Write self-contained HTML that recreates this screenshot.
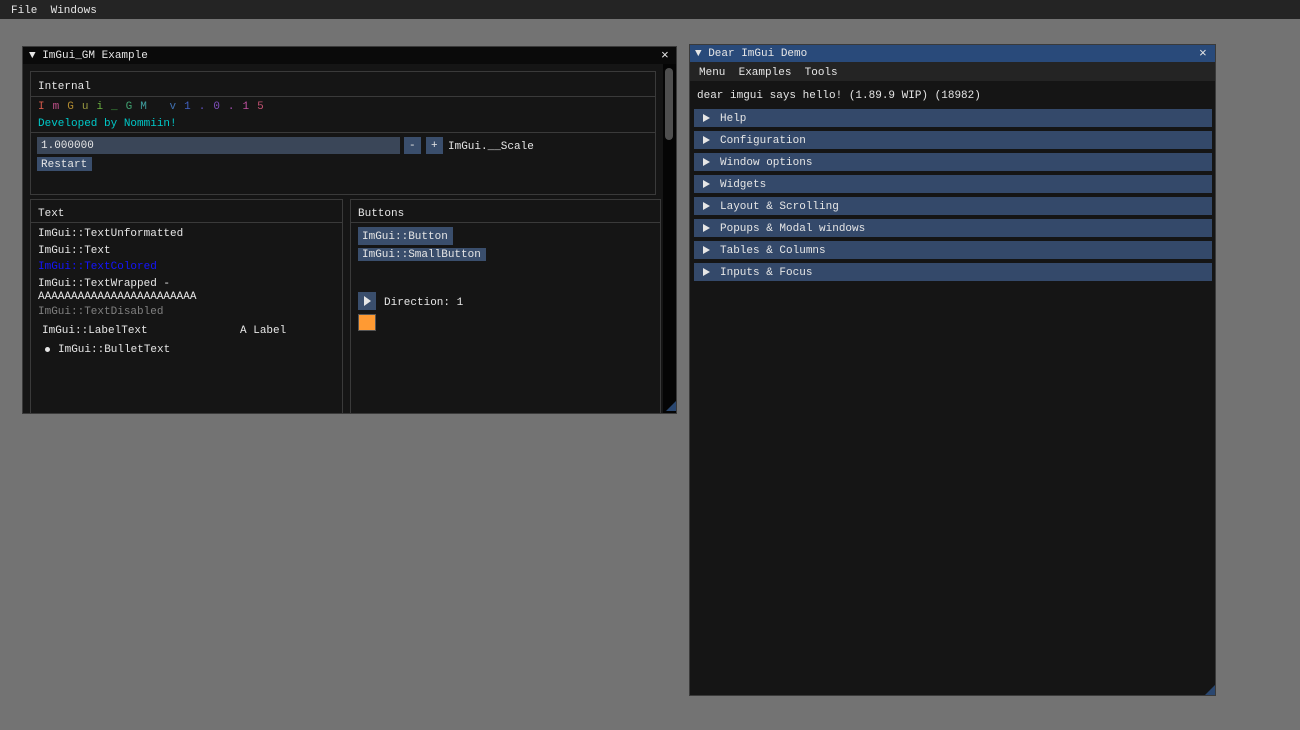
<!DOCTYPE html>
<html><head><style>
*{margin:0;padding:0;box-sizing:border-box}
body{width:1300px;height:730px;background:#737373;position:relative;overflow:hidden;font-family:"Liberation Mono",monospace;font-size:11px;color:#e6e6e6}
.a{position:absolute;white-space:pre;line-height:13px;margin-top:2px}
.box{position:absolute}
.hdr{position:absolute;left:694px;width:518px;height:18px;background:#34496a}
.hdr span{position:absolute;left:26px;top:4px;line-height:13px}
.hdr i{position:absolute;left:9px;top:5px;width:0;height:0;border-left:7px solid #e6e6e6;border-top:4px solid transparent;border-bottom:4px solid transparent}
</style></head><body>
<div class="box" style="left:0;top:0;width:1300px;height:19px;background:#242424"></div>
<div class="a" style="left:11px;top:3px">File  Windows</div>

<div class="box" style="left:22px;top:46px;width:655px;height:368px;background:#151515;border:1px solid #3a3a3a"></div>
<div class="box" style="left:23px;top:47px;width:653px;height:17px;background:#0a0a0a"></div>
<div class="a" style="left:29px;top:48px">▼ ImGui_GM Example</div>
<div class="a" style="left:661px;top:47px;font-size:13px">×</div>
<div class="box" style="left:663px;top:64px;width:13px;height:349px;background:#050505"></div>
<div class="box" style="left:665px;top:68px;width:8px;height:72px;background:#4f4f4f;border-radius:4px"></div>
<div class="box" style="left:666px;top:401px;width:0;height:0;border-left:10px solid transparent;border-bottom:10px solid #2a4770"></div>

<div class="box" style="left:30px;top:71px;width:626px;height:124px;border:1px solid #3a3a3a"></div>
<div class="a" style="left:38px;top:79px">Internal</div>
<div class="box" style="left:31px;top:96px;width:624px;height:1px;background:#3a3a3a"></div>
<div class="a" style="left:38px;top:99px;letter-spacing:8px"><span style="color:#d35a4a">I</span><span style="color:#c0508a">m</span><span style="color:#b08a30">G</span><span style="color:#9a9a40">u</span><span style="color:#6ab040">i</span><span style="color:#40a040">_</span><span style="color:#40a070">G</span><span style="color:#40a0a0">M</span> <span style="color:#4070b0">v</span><span style="color:#4060c0">1</span><span style="color:#6050c0">.</span><span style="color:#8050c0">0</span><span style="color:#a050b0">.</span><span style="color:#c050a0">1</span><span style="color:#c05070">5</span></div>
<div class="a" style="left:38px;top:116px;color:#00c8c8">Developed by Nommiin!</div>
<div class="box" style="left:31px;top:132px;width:624px;height:1px;background:#3a3a3a"></div>
<div class="box" style="left:37px;top:137px;width:363px;height:17px;background:#3a4658"></div>
<div class="a" style="left:41px;top:138px">1.000000</div>
<div class="box" style="left:404px;top:137px;width:17px;height:17px;background:#3a4e6c"></div>
<div class="a" style="left:409px;top:138px">-</div>
<div class="box" style="left:426px;top:137px;width:17px;height:17px;background:#3a4e6c"></div>
<div class="a" style="left:431px;top:138px">+</div>
<div class="a" style="left:448px;top:139px">ImGui.__Scale</div>
<div class="box" style="left:37px;top:157px;width:55px;height:14px;background:#3a4e6c"></div>
<div class="a" style="left:41px;top:157px">Restart</div>

<div class="box" style="left:30px;top:199px;width:313px;height:215px;border:1px solid #3a3a3a;border-bottom:none"></div>
<div class="a" style="left:38px;top:206px">Text</div>
<div class="box" style="left:31px;top:222px;width:311px;height:1px;background:#3a3a3a"></div>
<div class="a" style="left:38px;top:226px">ImGui::TextUnformatted</div>
<div class="a" style="left:38px;top:243px">ImGui::Text</div>
<div class="a" style="left:38px;top:259px;color:#1515ff">ImGui::TextColored</div>
<div class="a" style="left:38px;top:276px">ImGui::TextWrapped -
AAAAAAAAAAAAAAAAAAAAAAAA</div>
<div class="a" style="left:38px;top:304px;color:#808080">ImGui::TextDisabled</div>
<div class="a" style="left:42px;top:323px">ImGui::LabelText              A Label</div>
<div class="box" style="left:45px;top:347px;width:5px;height:5px;border-radius:50%;background:#e6e6e6"></div>
<div class="a" style="left:58px;top:342px">ImGui::BulletText</div>

<div class="box" style="left:350px;top:199px;width:311px;height:215px;border:1px solid #3a3a3a;border-bottom:none"></div>
<div class="a" style="left:358px;top:206px">Buttons</div>
<div class="box" style="left:351px;top:222px;width:309px;height:1px;background:#3a3a3a"></div>
<div class="box" style="left:358px;top:227px;width:95px;height:18px;background:#3a4e6c"></div>
<div class="a" style="left:362px;top:229px">ImGui::Button</div>
<div class="box" style="left:358px;top:248px;width:128px;height:13px;background:#3a4e6c"></div>
<div class="a" style="left:362px;top:247px">ImGui::SmallButton</div>
<div class="box" style="left:358px;top:292px;width:18px;height:18px;background:#3a4e6c"></div>
<div class="box" style="left:364px;top:296px;width:0;height:0;border-left:7px solid #e6e6e6;border-top:5px solid transparent;border-bottom:5px solid transparent"></div>
<div class="a" style="left:384px;top:295px">Direction: 1</div>
<div class="box" style="left:358px;top:314px;width:18px;height:17px;background:#ff9a33;border:1px solid #555"></div>

<div class="box" style="left:689px;top:44px;width:527px;height:652px;background:#151515;border:1px solid #3a3a3a"></div>
<div class="box" style="left:690px;top:45px;width:525px;height:17px;background:#294a7a"></div>
<div class="a" style="left:695px;top:46px">▼ Dear ImGui Demo</div>
<div class="a" style="left:1199px;top:45px;font-size:13px">×</div>
<div class="box" style="left:690px;top:62px;width:525px;height:19px;background:#242424"></div>
<div class="a" style="left:699px;top:65px">Menu  Examples  Tools</div>
<div class="a" style="left:697px;top:88px">dear imgui says hello! (1.89.9 WIP) (18982)</div>
<div class="hdr" style="top:109px"><i></i><span>Help</span></div>
<div class="hdr" style="top:131px"><i></i><span>Configuration</span></div>
<div class="hdr" style="top:153px"><i></i><span>Window options</span></div>
<div class="hdr" style="top:175px"><i></i><span>Widgets</span></div>
<div class="hdr" style="top:197px"><i></i><span>Layout &amp; Scrolling</span></div>
<div class="hdr" style="top:219px"><i></i><span>Popups &amp; Modal windows</span></div>
<div class="hdr" style="top:241px"><i></i><span>Tables &amp; Columns</span></div>
<div class="hdr" style="top:263px"><i></i><span>Inputs &amp; Focus</span></div>
<div class="box" style="left:1205px;top:685px;width:0;height:0;border-left:10px solid transparent;border-bottom:10px solid #2a4770"></div>
</body></html>
